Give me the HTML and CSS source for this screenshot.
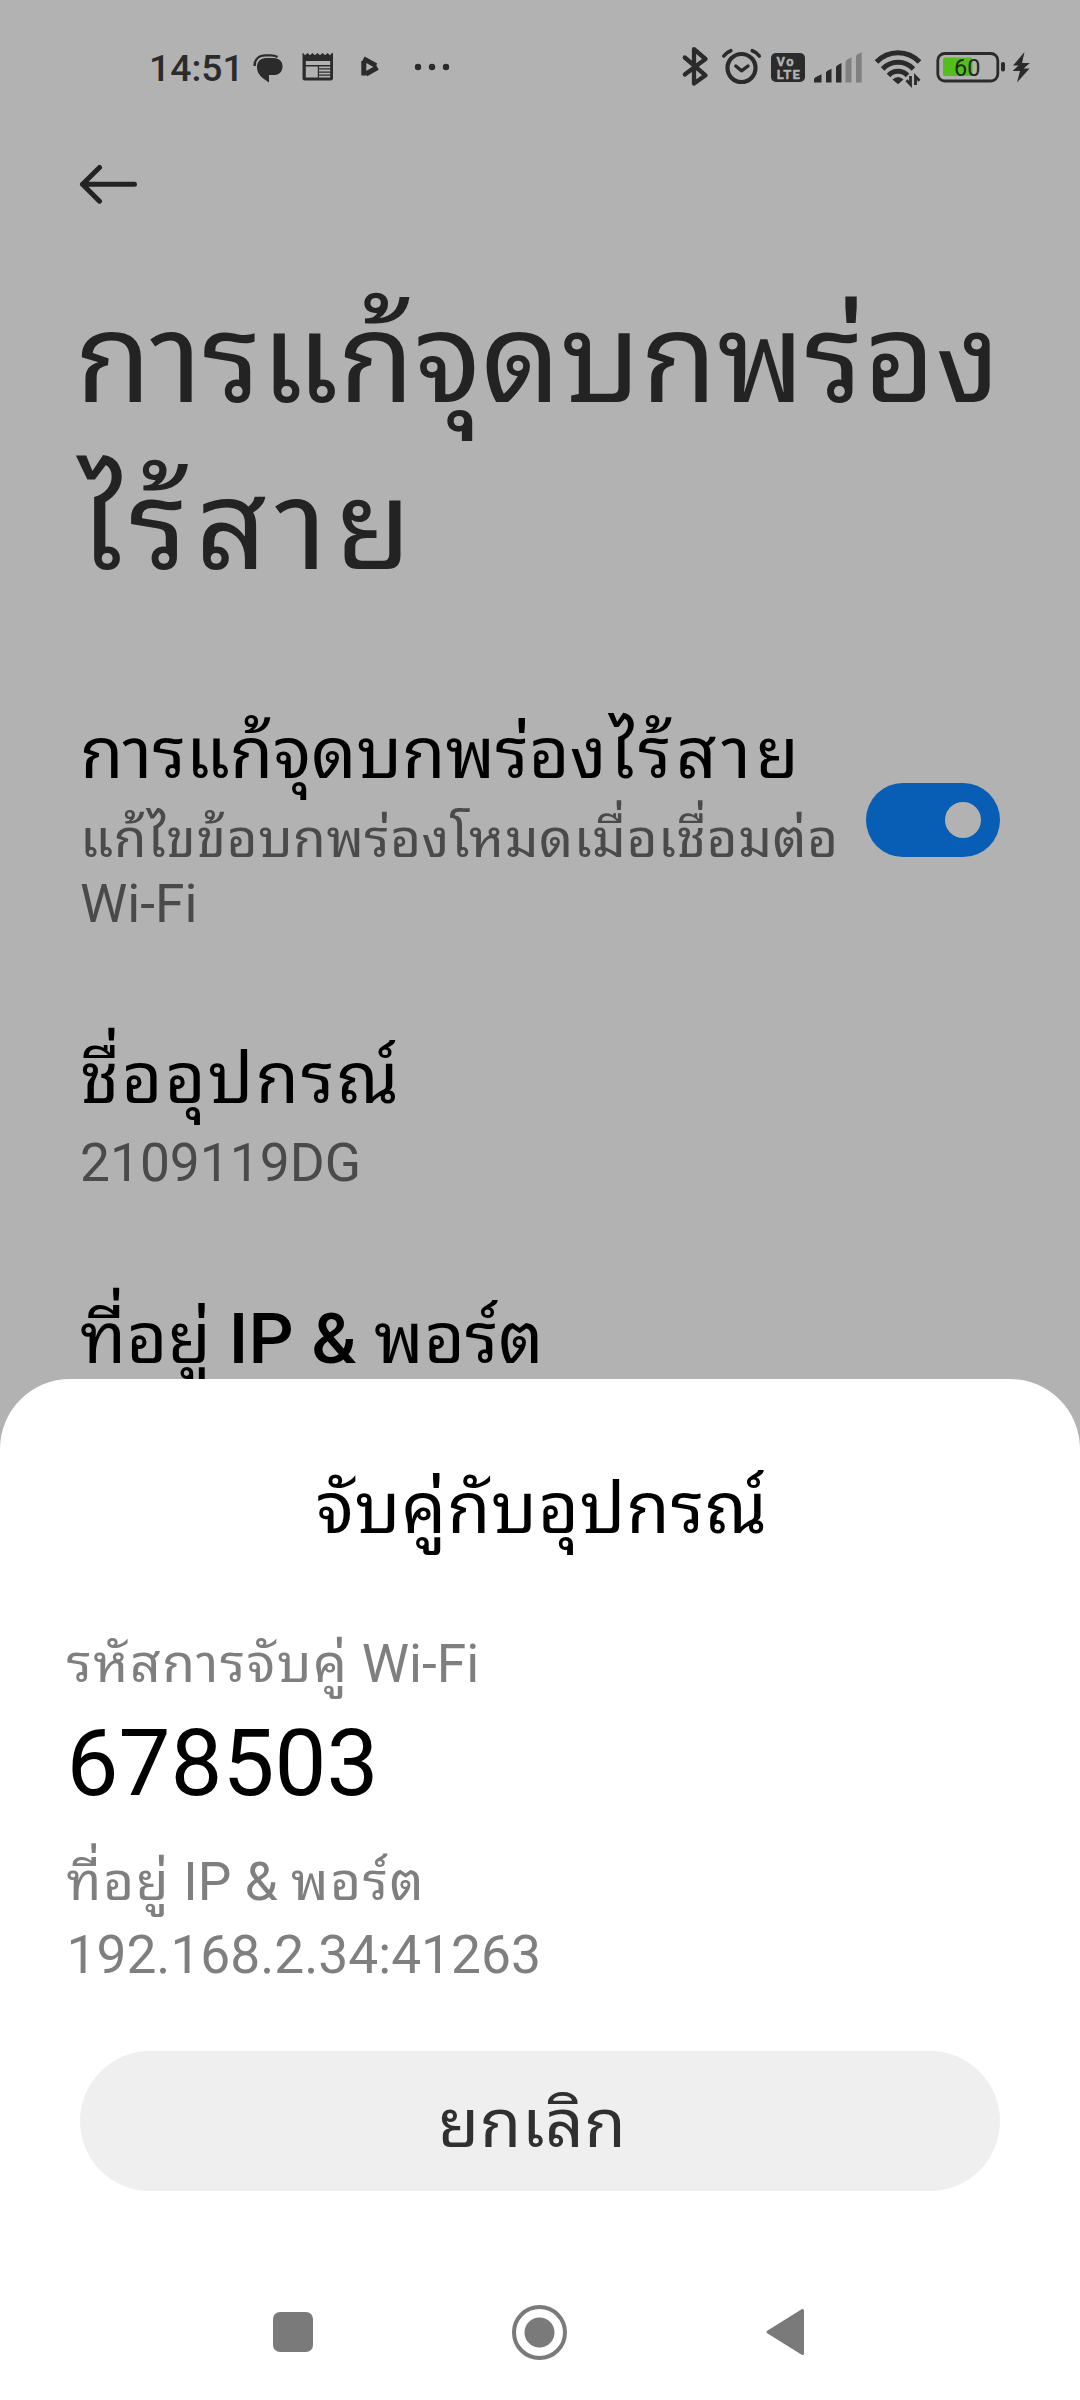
FILE: index.html
```html
<!DOCTYPE html>
<html lang="th">
<head>
<meta charset="utf-8">
<title>การแก้จุดบกพร่องไร้สาย</title>
<link rel="stylesheet" href="styles.css">
</head>
<body>
<div class="screen">
  <header class="status">
    <span class="clock">14:51</span>
    <svg class="ic-chat" viewBox="253 52 32 32" width="32" height="32"><path d="M254.600 66c0-6.500 4-10.600 11-10.600h5c3 0 5 .5 7 1.600" fill="none" stroke="#2b2b2b" stroke-width="2.400"/><path d="M266 58h7.500c6 0 9 3.600 9 8.400 0 5-3.300 8.600-9 8.600h-4.500v7.400c-4-2.400-7.800-5-10-8.400-1.300-2-2-4.200-2-7 0-5.400 3.500-9 9-9z" fill="#2b2b2b"/></svg>
    <svg class="ic-news" viewBox="302 52 32 30" width="32" height="30"><path d="M303 53l2 2.200 2.500-2.200 2.500 2.200 2.500-2.200 2.500 2.200 2.500-2.200 2.500 2.200 2.500-2.200 2.500 2.200 2.500-2.200 2.500 2.200 2-2.200 1 0v25a2.500 2.500 0 0 1-2.500 2.500h-25.500a2.500 2.500 0 0 1-2.500-2.500v-25z" fill="#2b2b2b"/><path d="M305.800 61h24.400v4h-24.400zM305.800 66.500h12v11h-12zM319 66.500h11.200v1.800h-11.200zM319 69.600h11.200v1.800h-11.200zM319 72.700h11.200v1.800h-11.200zM319 75.800h11.200v1.700h-11.200z" fill="#b2b2b2"/></svg>
    <svg class="ic-play" viewBox="360 55 20 23" width="20" height="23"><g fill="none" stroke="#2b2b2b" stroke-width="5"><path d="M363.800 61v14.500M363.500 58.600l12.500 7M366 74l11.500-6.500"/></g></svg>
    <svg class="ic-dots" viewBox="414 63 36 8" width="36" height="8"><g fill="#2b2b2b"><circle cx="418" cy="67" r="3.200"/><circle cx="432" cy="67" r="3.200"/><circle cx="446" cy="67" r="3.200"/></g></svg>
    <svg class="ic-right" viewBox="680 46 352 42" width="352" height="42">
      <path d="M684.800 57.500L705.500 75.300 694 83.500V49.200L705.500 59 684.800 74.500" fill="none" stroke="#2b2b2b" stroke-width="4.300" stroke-linejoin="round" stroke-linecap="round"/>
      <g fill="none" stroke="#2b2b2b" stroke-linecap="round"><circle cx="741.500" cy="68" r="14" stroke-width="4.200"/><path d="M735.800 66l5.700 4.800 6.500-4.800" stroke-width="3.400" stroke-linejoin="round"/><path d="M723.800 56q3-4 7-5.300M752.300 50.700q4.500 1.500 7 5.300" stroke-width="3.600"/></g>
      <rect x="771" y="53" width="34" height="29" rx="5" fill="#2b2b2b"/>
      <text x="776.500" y="66" class="volte" textLength="17">Vo</text><text x="776.700" y="78.700" class="volte" textLength="23">LTE</text>
      <g fill="#2b2b2b"><path d="M814 82.500v-3q0-1.500 1.500-2.200l6-3v8.200zM826 82.500v-9.500q0-1.500 1.500-2.200l4-2v13.700zM836 82.500v-15q0-1.500 1.500-2.200l4-2.200v19.400z"/></g>
      <g fill="#808080"><path d="M845.500 82.500v-20.500q0-1.500 1.500-2.200l4.500-2.500v25.200zM856 82.500v-26q0-1.500 1.500-2.200l4.200-2v30.200z"/></g>
      <g fill="none" stroke="#2b2b2b" stroke-width="5"><path d="M876.500 62a29.500 29.500 0 0 1 43 0M882.600 69a21 21 0 0 1 30.800 0M888.500 75.500a13 13 0 0 1 19 0"/></g>
      <path d="M892.500 79.500q5.500-5 11 0l-5.500 4.800z" fill="#2b2b2b"/>
      <path d="M910.500 76v8.500l-4-4.200M915.500 85v-8.500l4 4.200" fill="none" stroke="#2b2b2b" stroke-width="2.800"/>
      <rect x="943" y="57.500" width="29.500" height="18.500" rx="2" fill="#54bf1c"/>
      <rect x="937.800" y="53.500" width="60" height="27.500" rx="7" fill="none" stroke="#2b2b2b" stroke-width="2.800"/>
      <rect x="1001" y="62" width="4" height="9.500" rx="1.800" fill="#2b2b2b"/>
      <text x="954" y="76" class="batt">60</text>
      <path d="M1024.500 52L1013 65.500h5.500l-6 5.500h7.500L1017 82.500 1029.500 68.500h-6l6.500-5.500h-8z" fill="#2b2b2b"/>
    </svg>
  </header>
  <nav class="toolbar">
    <svg viewBox="78 164 62 40" width="62" height="40"><path d="M99.500 167.500L82.500 184.300 99.500 201.200M82.500 184.300H134.500" fill="none" stroke="#232323" stroke-width="5" stroke-linecap="round" stroke-linejoin="round"/></svg>
  </nav>
  <h1 class="title"><span>การแก้จุดบกพร่อง</span><br><span class="title-end">ไร้สาย</span></h1>
  <main class="list">
    <section class="item item-switch">
      <div class="item-text">
        <div class="name"><span class="name-a">การแก้จุดบกพร่อง</span><span class="name-b">ไร้สาย</span></div>
        <div class="desc"><span class="desc-th">แก้ไขข้อบกพร่องโหมดเมื่อเชื่อมต่อ</span><br>Wi-Fi</div>
      </div>
      <div class="toggle"><span class="knob"></span></div>
    </section>
    <section class="item">
      <div class="name name-dev">ชื่ออุปกรณ์</div>
      <div class="desc">2109119DG</div>
    </section>
    <section class="item">
      <div class="name">ที่อยู่ <b>IP &amp;</b> พอร์ต</div>
    </section>
  </main>
  <div class="sheet">
    <h2 class="sheet-title">จับคู่กับอุปกรณ์</h2>
    <div class="pair">
      <div class="label"><span class="label-th">รหัสการจับคู่</span> Wi-Fi</div>
      <div class="code">678503</div>
      <div class="label"><span class="label-th">ที่อยู่</span> IP &amp; <span class="label-th">พอร์ต</span></div>
      <div class="label addr">192.168.2.34:41263</div>
    </div>
    <button class="cancel">ยกเลิก</button>
    <div class="navbar">
      <span class="recents"></span>
      <span class="home"></span>
      <svg class="back" viewBox="764 2306 42 52" width="42" height="52"><path d="M802.500 2310.500v43L768 2332z" fill="#7a7a7a" stroke="#7a7a7a" stroke-width="3" stroke-linejoin="round"/></svg>
    </div>
  </div>
</div>
</body>
</html>
```
FILE: styles.css
```css
* { box-sizing: border-box; }
body { margin: 0; font-family: Roboto, "Noto Sans Thai Looped", "Noto Sans", sans-serif; }
.screen { position: relative; width: 1080px; height: 2400px; overflow: hidden; background: #b2b2b2; }

.status { display: flex; align-items: flex-start; height: 134px; padding-top: 46px; }
.clock { width: 104px; margin-left: 149px; font-size: 37.3px; line-height: 44px; font-weight: 500; color: #2b2b2b; }
.status svg { flex: none; }
.ic-chat { margin-top: 6px; }
.ic-news { margin: 6px 0 0 17px; }
.ic-play { margin: 9px 0 0 26px; }
.ic-dots { margin: 17px 0 0 34px; }
.ic-right { margin-left: 230px; }
.volte { font-size: 13px; font-weight: 700; fill: #b2b2b2; stroke: #b2b2b2; stroke-width: .4px; }
.batt { font-size: 23.5px; fill: #1d2b16; }

.toolbar { height: 142px; padding: 30px 0 0 78px; }
.toolbar svg { display: block; }
.title { margin: 0; padding-left: 75px; font-size: 124.2px; line-height: 167px; font-weight: 400; color: #232323; white-space: nowrap; }
.title-end { margin-left: 4px; letter-spacing: 8px; }

.list { padding: 49px 80px 0; }
.item { padding: 48px 0; }
.item-switch { display: flex; justify-content: space-between; align-items: center; }
.item-text { width: 770px; }
.name { font-size: 70.7px; line-height: 94px; color: #000; white-space: nowrap; }
.name-b { margin-left: 3px; letter-spacing: 4.6px; }
.name-dev { letter-spacing: 2px; }
.name b { font-weight: 500; }
.desc { margin-top: 5px; font-size: 53.3px; line-height: 65px; color: #4a4a4a; white-space: nowrap; }
.item-switch .desc { margin: 6px 0 -1px; }
.desc-th { letter-spacing: .5px; }
.toggle { display: flex; align-items: center; justify-content: flex-end; flex: none; width: 134px; height: 74px; margin-bottom: 3px; padding-right: 19px; border-radius: 37px; background: #085db4; }
.knob { width: 36px; height: 36px; border-radius: 50%; background: #b2b2b2; }

.sheet { position: absolute; left: 0; right: 0; bottom: 0; display: flex; flex-direction: column; height: 1021px; padding-top: 83px; border-radius: 70px 70px 0 0; background: #fff; }
.sheet-title { margin: 0; padding-left: 4px; font-size: 70.7px; line-height: 94px; font-weight: 400; letter-spacing: .8px; text-align: center; color: #000; }
.pair { margin-top: 76px; padding-left: 66.5px; }
.label { font-size: 53.3px; line-height: 65px; color: #7f7f7f; }
.label-th { letter-spacing: 1.6px; }
.code { margin: 13px 0 32px; font-size: 92.5px; line-height: 108px; color: #000; }
.addr { margin-top: 8px; }
.cancel { flex: none; height: 140px; margin: 63px 80px 0; padding: 0 16px 0 0; border: 0; border-radius: 70px; background: #efefef; font-family: inherit; font-size: 67.5px; line-height: 146px; letter-spacing: .5px; color: #303030; }
.navbar { display: flex; align-items: center; margin-top: auto; height: 136px; padding-left: 273px; }
.recents { width: 40px; height: 40px; border-radius: 7px; background: #7a7a7a; }
.home { width: 55px; height: 55px; margin-left: 199px; border: 4.5px solid #7a7a7a; border-radius: 50%; background: radial-gradient(circle, #7a7a7a 14.5px, #fff 15.5px); }
.back { margin-left: 197px; }
```
